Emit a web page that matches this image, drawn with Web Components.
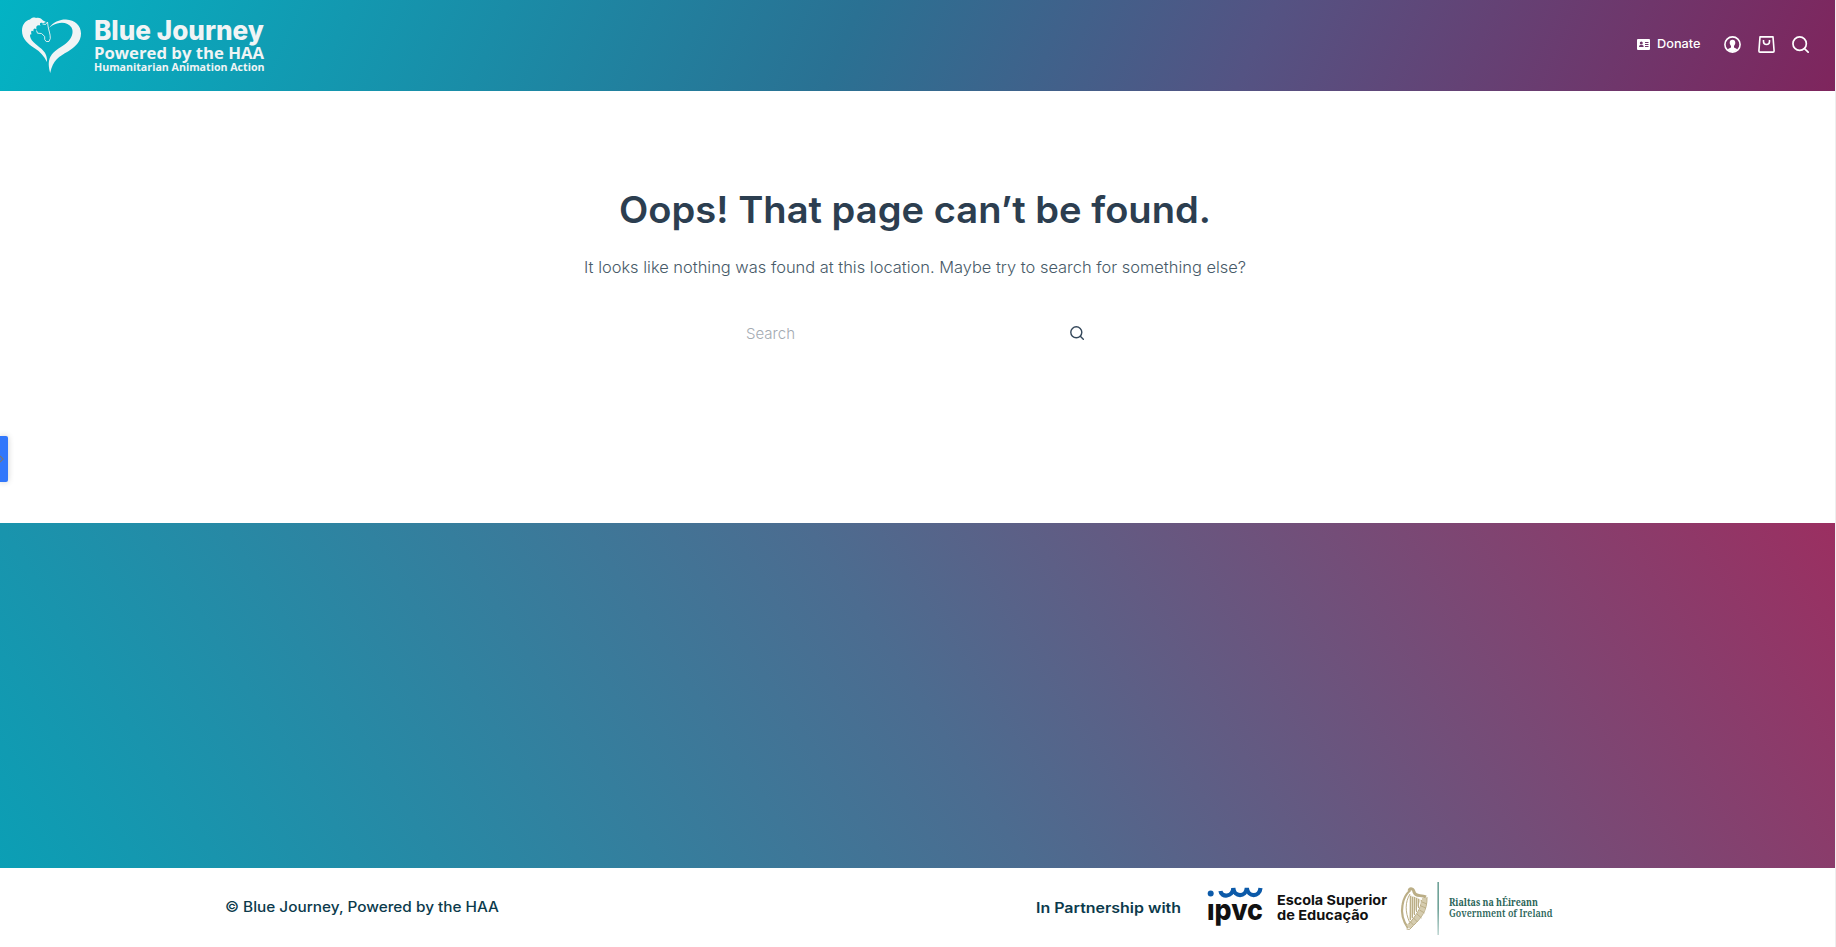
<!DOCTYPE html>
<html lang="en"><head><meta charset="utf-8"><title>Page not found – Blue Journey</title>
<style>html,body{margin:0;background:#fff;overflow:hidden}body{height:947px;font-family:Inter,"Open Sans",sans-serif}</style></head>
<body><bj-page></bj-page>
<script>
const define=(name,html)=>customElements.define(name,class extends HTMLElement{constructor(){super();this.attachShadow({mode:'open'}).innerHTML=html}});

/* Single line of text set to an exact measure */
customElements.define('fit-text',class extends HTMLElement{
 constructor(){super();this.attachShadow({mode:'open'})}
 connectedCallback(){const a=n=>this.getAttribute(n),w=a('w'),s=+a('s'),h=Math.round(s*1.4);
 this.shadowRoot.innerHTML=`<style>:host{display:block;width:${w}px;height:${h}px}svg{display:block;overflow:visible}text{fill:currentColor}</style><svg width="${w}" height="${h}"><text x="0" y="${s}" font-size="${s}" textLength="${w}" lengthAdjust="spacingAndGlyphs">${this.textContent}</text></svg>`}
});

define('bj-logo',`<style>:host{display:flex;gap:10px;color:#f0f4f5}svg{display:block;overflow:visible}</style>
<svg width="62" height="56" viewBox="0 0 62 56" fill="currentColor">
<path d="M26.7 11.5C31 5 38 2.5 44 2.6C53 3 59 9 59 16.5C59 25 53 30 46 34.500C37 39.500 31 43 28.200 56C26.500 50 26 44 28.500 39.500C32 33 40 30 45 25.500C50 21 52 15 49.500 10.500C46 4.500 37 4.500 30.700 8.200C29 9 28 10 26.700 11.500Z"/>
<path d="M21 6.200C18.500 5 17 6 18.500 8.700C15.500 7.500 13.500 9 14.500 12.500C12.500 10.500 11 11.500 11.500 14.500C9.500 13 8.600 14 9.500 17.500C7.500 16.500 7.500 20 10 23.500C14 28.500 22 32 24 38C25 41 25.200 43 25 45C22 39 18 34.500 13 31.500C6 27 0 22 0 14C0 8 3 3.500 8 2.500C10 .5 12 .2 14 1C17 0 19.500 1.500 21 3.500L24 5Z"/>
<path d="M20.500 7L23.500 7.500L25.500 5L26 9C26.500 13 28.500 17 28.300 21.500L27 24.500H24.200L22.700 22.500V19.500L19.500 16.500L15.500 16.200L14.500 13.500" fill="none" stroke="currentColor" stroke-width=".9"/></svg>
<svg width="172" height="56" fill="currentColor"><text x="0" y="23" font-family="Inter" font-weight="800" font-size="26.500" textLength="170" lengthAdjust="spacingAndGlyphs">Blue Journey</text><text x="0" y="41.500" font-family="Open Sans" font-weight="700" font-size="16.500" textLength="170" lengthAdjust="spacingAndGlyphs">Powered by the HAA</text><text x="0" y="54" font-family="Open Sans" font-weight="700" font-size="10.700" textLength="170.500" lengthAdjust="spacingAndGlyphs">Humanitarian Animation Action</text></svg>`);

define('search-icon',`<style>:host{display:block;width:var(--size,16px);height:var(--size,16px)}svg{display:block}</style><svg width="100%" height="100%" viewBox="0 0 16 16" fill="none" stroke="currentColor" stroke-width="1.600" stroke-linecap="round"><circle cx="7.200" cy="7.200" r="6.300"/><path d="M11.800 11.800L15.200 15.200"/></svg>`);

define('header-tools',`<style>:host{display:flex;align-items:center;color:#fff;margin-top:-1px}svg{display:block}.d{display:flex;align-items:center;gap:7px;margin-right:24px;font-weight:550}.i{display:flex;gap:17px;align-items:center}search-icon{--size:17px}</style>
<div class="d"><svg width="13" height="11" viewBox="0 0 13 11"><path fill="currentColor" fill-rule="evenodd" d="M1 0H12Q13 0 13 1V10Q13 11 12 11H1Q0 11 0 10V1Q0 0 1 0ZM4.300 2.500A1.500 1.500 0 1 0 4.300 5.500A1.500 1.500 0 1 0 4.300 2.500ZM2 8H6.700Q6.700 6 5.300 6H3.400Q2 6 2 8ZM8 3V4H11.500V3ZM8 5V6H11.500V5ZM8 7V8H11.500V7Z"/></svg><fit-text w="43.500" s="12">Donate</fit-text></div>
<div class="i"><svg width="17" height="17" viewBox="0 0 17 17"><circle cx="8.500" cy="8.500" r="7.600" fill="none" stroke="currentColor" stroke-width="1.600"/><path fill="currentColor" d="M8.500 3.800C6.600 3.800 5.700 5 5.700 6.800C5.700 8.300 6.400 9.200 7 9.900V11.500L3.500 13.300Q6 16 8.500 16T13.500 13.300L10 11.500V9.900C10.600 9.200 11.300 8.300 11.300 6.800C11.300 5 10.400 3.800 8.500 3.800Z"/></svg>
<svg width="17" height="17" viewBox="0 0 17 17" fill="none" stroke="currentColor" stroke-width="1.600" stroke-linejoin="round"><path d="M2 .9H15L16.100 15Q16.100 16.100 15 16.100H2Q.9 16.100.9 15ZM5.500 3.900V5.500A3 3 0 0 0 11.500 5.500V3.900"/></svg><search-icon></search-icon></div>`);

define('bj-header',`<style>:host{display:flex;justify-content:space-between;align-items:center;box-sizing:border-box;height:91px;padding:0 26px 1px 22px;background:linear-gradient(114deg,#03b3c4 0%,#2a7193 46%,#545383 68%,#7f255d 100%)}</style><bj-logo></bj-logo><header-tools></header-tools>`);

define('not-found',`<style>:host{display:flex;flex-direction:column;align-items:center;box-sizing:border-box;height:432px;padding:95px 6px 0 0;color:#2c3e50}h1{margin:0;font-weight:600}p{margin:19px 0 0;font-weight:300;color:#475a68}.s{display:flex;justify-content:space-between;align-items:flex-start;width:338px;margin-top:45px;color:#a4abb2;font-weight:300}search-icon{--size:14px;margin-top:1.500px;color:#34475a}</style>
<h1><fit-text w="592" s="37">Oops! That page can’t be found.</fit-text></h1><p><fit-text w="662" s="16">It looks like nothing was found at this location. Maybe try to search for something else?</fit-text></p><div class="s"><fit-text w="49" s="15">Search</fit-text><search-icon></search-icon></div>`);

define('ipvc-logo',`<style>:host{display:block}svg{display:block;overflow:visible}</style><svg width="180" height="42" fill="#111"><circle cx="2.700" cy="5.400" r="3" fill="#0c5aa9"/><path d="M12.500 3C13 9.500 25 9.500 25.300 0C26 9.500 38 9.500 38.800 0C40 9.500 51.500 9.500 52.500 0" fill="none" stroke="#0c5aa9" stroke-width="4.200"/><text x="-1" y="32" font-family="Inter" font-weight="800" font-size="29" textLength="56" lengthAdjust="spacingAndGlyphs">ıpvc</text><g font-family="Inter" font-weight="700" font-size="13.600"><text x="69" y="17" textLength="110" lengthAdjust="spacingAndGlyphs">Escola Superior</text><text x="69" y="31.500" textLength="91.500" lengthAdjust="spacingAndGlyphs">de Educação</text></g></svg>`);

define('ireland-logo',`<style>:host{display:block}svg{display:block;overflow:visible}</style><svg width="152" height="53"><defs><linearGradient id="g" x2="0" y2="1"><stop stop-color="#4d8c80"/><stop offset=".5" stop-color="#4d8c80"/><stop offset="1" stop-color="#b2cec9"/></linearGradient></defs>
<g fill="none" stroke="#bbae86"><path fill="#e2dcc6" stroke="none" d="M8.500 13L17 16L20 18L10 37L8 38Z"/><path stroke-width="2.200" d="M7 46C2 39 0 31 1.500 23C2.500 16 5 12 9 8.500"/><path stroke-width="1" d="M8.500 40C4 30 4 20 9 12M9.500 14V38M11.500 15V36M13.500 15V33M15.500 16V30M17.500 17V26"/><path stroke-width="3" d="M8 9C9 5.500 12.500 6.500 13 10C14.500 15 19 12.500 25 15"/><path stroke="#d5ccaf" stroke-width="5" d="M23.500 16C23.500 28 17 36 7 45"/><path stroke-width="1" d="M26 15C26.500 29 20 36 12.500 43.500L8.500 47.500L5.500 47M20.500 18C20 27 15 33 8 42M21 20L26 22M20 24L25 26M18.500 28L23.500 31M16 32L20.500 36M12.500 36L16.500 40M9.500 40L12.500 43"/></g>
<rect x="36.500" width="1.300" height="53" fill="url(#g)"/><g font-family="Noto Serif,Liberation Serif,serif" fill="#2b6559" font-size="11"><text x="48" y="23.500" font-weight="700" textLength="89" lengthAdjust="spacingAndGlyphs">Rialtas na hÉireann</text><text x="48" y="35.200" font-size="11.500" textLength="103.500" lengthAdjust="spacingAndGlyphs">Government of Ireland</text></g></svg>`);

define('bj-footer',`<style>:host{display:block}.b{height:345px;background:linear-gradient(57deg,#0b9fb5,#4c6c90 50%,#9b2f61)}.c{display:flex;align-items:flex-start;height:79px;color:#0b3a4c;font-weight:600;padding-left:225px}.copy{margin:30px 537px 0 0;font-weight:550}.with{margin:31px 27px 0 0}ipvc-logo{margin-top:20px}ireland-logo{margin:14px 0 0 13px}</style><div class="b"></div><div class="c"><fit-text class="copy" w="274" s="14">© Blue Journey, Powered by the HAA</fit-text><fit-text class="with" w="145" s="14">In Partnership with</fit-text><ipvc-logo></ipvc-logo><ireland-logo></ireland-logo></div>`);

define('side-tab',`<style>:host{position:absolute;left:0;top:436px;width:8px;height:46px;background:#3177fb;border-radius:0 2px 2px 0;box-shadow:0 0 6px #0003}svg{display:block;margin-top:18px}</style><svg width="4" height="10" fill="none" stroke="#777" stroke-width="1.200"><path d="M0 2L3 5L0 8"/></svg>`);

define('bj-page',`<style>:host{display:block;position:relative;box-sizing:border-box;height:947px;border-right:1px solid #eee;overflow:hidden}</style><bj-header></bj-header><not-found></not-found><bj-footer></bj-footer><side-tab></side-tab>`);
</script></body></html>
